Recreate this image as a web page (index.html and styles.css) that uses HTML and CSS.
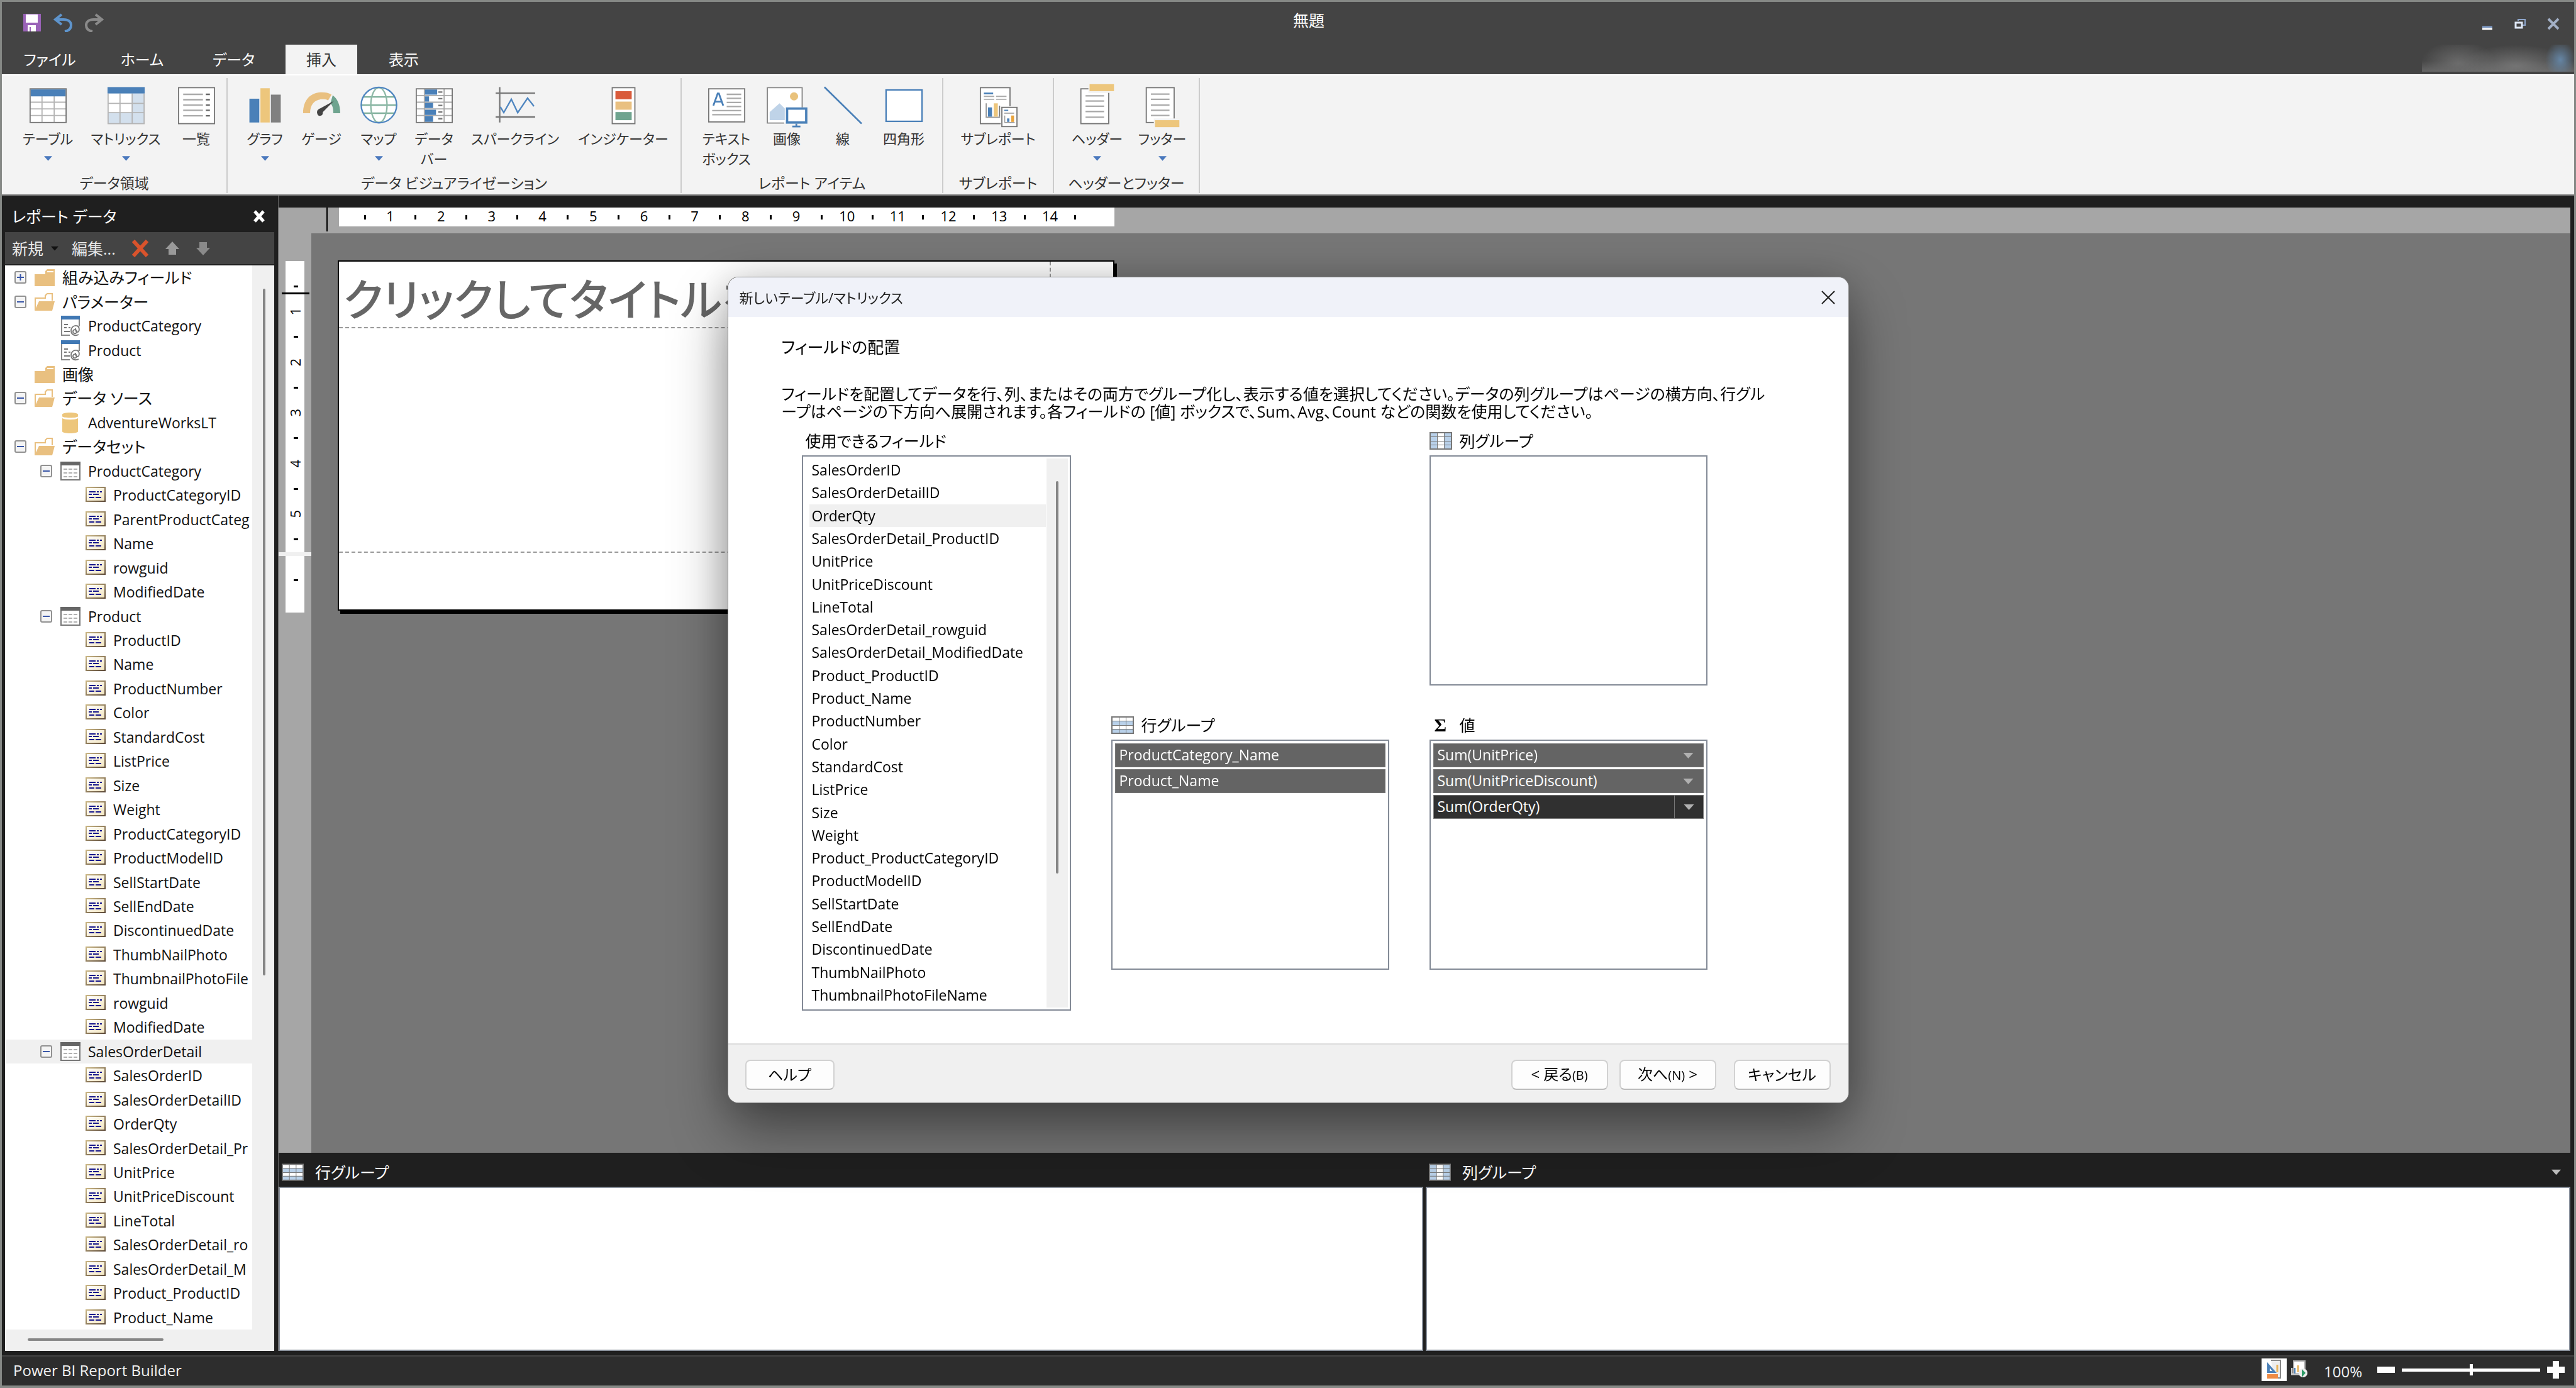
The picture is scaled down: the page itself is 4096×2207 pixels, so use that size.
FILE: index.html
```html
<!DOCTYPE html>
<html lang="ja">
<head>
<meta charset="utf-8">
<title>無題 - Power BI Report Builder</title>
<link rel="stylesheet" href="styles.css">
</head>
<body>
<svg class="sprite" aria-hidden="true">
  <defs>
    <linearGradient id="paper" x1="0" y1="0" x2="1" y2="1"><stop offset="0" stop-color="#fff"/><stop offset="1" stop-color="#f3e6c0"/></linearGradient>
    <linearGradient id="frame" x1="0" y1="0" x2="1" y2="1"><stop offset="0" stop-color="#c9b583"/><stop offset="1" stop-color="#5d4a38"/></linearGradient>
  </defs>
  <symbol id="i-table" viewBox="0 -4 72 78"><rect x="5" y="6" width="62" height="58" fill="#fff"/><path d="M25.5 18v46M46.500 18v46M5 29h62M5 40.500h62M5 52h62" stroke="#b5b5b5" stroke-width="2" fill="none"/><rect x="5" y="6" width="62" height="58" fill="none" stroke="#777" stroke-width="2"/><rect x="6" y="7" width="60" height="12" fill="#4a80b8"/></symbol>
  <symbol id="i-matrix" viewBox="0 -4 72 78"><rect x="5" y="14" width="62" height="52" fill="#fff"/><path d="M46 14h21v52H5V47h41z" fill="#d3e0ed"/><path d="M5 14v52h62V14M25.500 14v52M46.500 14v52M5 31h62M5 47h62" stroke="#b5b5b5" stroke-width="2" fill="none"/><rect x="4" y="3" width="64" height="11" fill="#4a80b8"/></symbol>
  <symbol id="i-list" viewBox="0 -4 72 78"><rect x="5" y="4" width="62" height="62" fill="#fff" stroke="#777" stroke-width="2"/><path d="M13 15.500h34M13 24.700h34M13 34h34M13 43h34M13 52.500h34" stroke="#aaa" stroke-width="2.500"/><path d="M52 15.500h7M52 24.700h7M52 34h7M52 43h7M52 52.500h7" stroke="#666" stroke-width="2.500"/></symbol>
  <symbol id="i-chart" viewBox="0 -4 72 78"><rect x="9" y="23" width="17" height="41" fill="#4a80b8"/><rect x="28" y="5" width="16" height="59" fill="#edc67c"/><rect x="46" y="16" width="17" height="48" fill="#808080"/></symbol>
  <symbol id="i-gauge" viewBox="0 -4 72 78"><path d="M4 48C4 24 18 12 36 12c7 0 12 1 17 4l-6 10c-3-2-6-2-10-2-12 0-21 8-21 24z" fill="#e9c080"/><path d="M55 17c8 6 13 16 13 31H56c0-8-1-13-5-17z" fill="#6fa48f"/><path d="M57 27 38 46a5 6 0 1 1-7-5z" fill="#444"/></symbol>
  <symbol id="i-map" viewBox="0 -4 72 78"><ellipse cx="36" cy="34" rx="30.500" ry="30.500" fill="#fff"/><path d="M9 20h54M6 34h60M9 48h54" stroke="#7fb09c" stroke-width="2.500"/><ellipse cx="36" cy="34" rx="14" ry="30" fill="none" stroke="#8db8a6" stroke-width="2.500"/><ellipse cx="36" cy="34" rx="30.500" ry="30.500" fill="none" stroke="#4f86c0" stroke-width="2.500"/></symbol>
  <symbol id="i-databar" viewBox="0 -4 72 78"><rect x="5" y="6" width="62" height="58" fill="#fff"/><path d="M19 6v58M53 6v58M5 17.500h62M5 29h62M5 40.500h62M5 52h62" stroke="#aaa" stroke-width="2"/><path d="M20 7h21v9H20zM20 19h7v9h-7zM20 30h14v9H20zM20 42h19v9H20zM20 53h14v10H20z" fill="#4a80b8"/><path d="M43 11.500h7M43 23h7M43 34.500h7M43 46h7M43 57.500h7" stroke="#777" stroke-width="2.500"/><rect x="5" y="6" width="62" height="58" fill="none" stroke="#777" stroke-width="2"/></symbol>
  <symbol id="i-spark" viewBox="0 -4 72 78"><path d="M9 3v61M2 13.500h68M2 54.500h68" stroke="#777" stroke-width="2.500"/><path d="m10 37 6 10 13-23 11 23 17-25 11 14" fill="none" stroke="#4f86c0" stroke-width="2.500"/></symbol>
  <symbol id="i-indicator" viewBox="0 -4 72 78"><rect x="16.500" y="4" width="39" height="62" fill="#fff" stroke="#777" stroke-width="2"/><rect x="22" y="10" width="28" height="14" fill="#d95b3b"/><rect x="22" y="28" width="28" height="14" fill="#e9c080"/><rect x="22" y="46" width="28" height="14" fill="#6fa48f"/></symbol>
  <symbol id="i-textbox" viewBox="0 -4 72 78"><rect x="5" y="6" width="62" height="57" fill="#fff" stroke="#777" stroke-width="2"/><path d="m13 35 7.500-21h2L30 35M16 28h11" fill="none" stroke="#4a80b8" stroke-width="3"/><path d="M36 15.500h25M36 22.500h25M36 29.500h25M36 36.500h25M11 43.500h50M11 50.500h50" stroke="#aaa" stroke-width="2.500"/></symbol>
  <symbol id="i-image" viewBox="0 -4 72 78"><path d="M31 65H2V4h60v34" fill="#fff" stroke="#888" stroke-width="2"/><circle cx="48" cy="19" r="7" fill="#e9c27c"/><path d="M6 60V46l17-15 9 9v20z" fill="#bfd3e8"/><rect x="36" y="40" width="33" height="24" fill="#fff" stroke="#4a80b8" stroke-width="4"/><path d="M52 66v5M45 71h14" stroke="#4a80b8" stroke-width="3"/></symbol>
  <symbol id="i-line" viewBox="0 -4 72 78"><path d="m4 3 64 63" stroke="#4a80b8" stroke-width="3"/></symbol>
  <symbol id="i-rect" viewBox="0 -4 72 78"><rect x="5" y="8" width="62" height="54" fill="#fff" stroke="#4a80b8" stroke-width="2.500"/></symbol>
  <symbol id="i-subreport" viewBox="0 -4 72 78"><rect x="5" y="4" width="51" height="62" fill="#fff" stroke="#777" stroke-width="2"/><path d="M11 14h16" stroke="#4a80b8" stroke-width="3"/><path d="M11 19h18M32 19h18M11 24h18M32 24h18" stroke="#aaa" stroke-width="2"/><path d="M15 31v24h24" fill="none" stroke="#999" stroke-width="2"/><path d="M18 38h7v16h-7z" fill="#4a80b8"/><path d="M28 31h7v23h-7z" fill="#edc67c"/><path d="M38 35v19" stroke="#777" stroke-width="2"/><rect x="40" y="36" width="30" height="36" fill="#f3f3f3"/><rect x="42" y="38" width="26" height="33" fill="#fff" stroke="#777" stroke-width="2"/><path d="M46 43h7" stroke="#4a80b8" stroke-width="2"/><path d="M46 48h17" stroke="#aaa" stroke-width="2"/><path d="M47 52v12h17" fill="none" stroke="#999" stroke-width="1.500"/><path d="M51 57h4v6h-4z" fill="#4a80b8"/><path d="M58 52h5v11h-5z" fill="#e8a33c"/></symbol>
  <symbol id="i-header" viewBox="0 -4 72 78"><rect x="8" y="6" width="48" height="60" fill="#fff" stroke="#777" stroke-width="2"/><path d="M16 18h32M16 27h32M16 36h32M16 45h32M16 55h32" stroke="#aaa" stroke-width="2.500"/><rect x="21" y="-4" width="45" height="17" fill="#f3f3f3"/><rect x="23" y="-2" width="42" height="12" fill="#edc67c"/></symbol>
  <symbol id="i-footer" viewBox="0 -4 72 78"><rect x="8" y="4" width="48" height="60" fill="#fff" stroke="#777" stroke-width="2"/><path d="M16 15h32M16 24h32M16 34h32M16 43h32M16 52h32" stroke="#aaa" stroke-width="2.500"/><rect x="21" y="57" width="45" height="17" fill="#f3f3f3"/><rect x="23" y="60" width="42" height="12" fill="#edc67c"/></symbol>
  <symbol id="i-folder" viewBox="0 0 32 34"><path d="M0 12h17V7l3-3h12v27H0z" fill="#e9c080"/><path d="M20 8h10" stroke="#fff" stroke-width="2"/></symbol>
  <symbol id="i-open" viewBox="0 0 32 34"><path d="M1 30V11h16V7l3-3h8v11" fill="#fff" stroke="#e9c080" stroke-width="2"/><path d="M0 31 7 16h25l-4 15z" fill="#e9c080"/></symbol>
  <symbol id="i-param" viewBox="0 0 32 34"><path d="M2 2v30h13M30 6v12" fill="none" stroke="#888" stroke-width="2"/><rect x="1" y="1" width="30" height="6" fill="#4078b4"/><path d="M6 15h6M6 20h4M13 20h3M6 26h9" stroke="#777" stroke-width="2"/><path d="M29 31c-6 3-12 0-12-6s5-9 9-8c5 1 5 10 1 10-3 0-3-6-3-6m1 3a3 3 0 1 1-4 0 3 3 0 0 1 4 0" fill="none" stroke="#777" stroke-width="1.800"/></symbol>
  <symbol id="i-db" viewBox="0 0 32 34"><path d="M3 4c0-4 25-4 25 0v3c0 3-25 3-25 0zM3 10c5 3 20 3 25 0v21c0 4-25 4-25 0z" fill="#edc67c"/></symbol>
  <symbol id="i-dataset" viewBox="0 0 32 34"><rect x="1" y="3" width="30" height="28" fill="#fff" stroke="#777" stroke-width="2"/><rect x="0" y="2" width="32" height="6" fill="#666"/><path d="M5 14h22M5 20h22M5 26h22" stroke="#b0b0b0" stroke-width="2" stroke-dasharray="6 2"/></symbol>
  <symbol id="i-field" viewBox="0 0 32 34"><rect x="1" y="5" width="30" height="22" fill="url(#paper)" stroke="url(#frame)" stroke-width="2"/><path d="M6 12h10M18 12h3M23 12h3M5 16h5M12 16h9M6 21h8M16 21h9" stroke="#17178c" stroke-width="2"/></symbol>
  <symbol id="i-rows" viewBox="0 0 36 28"><rect width="36" height="28" fill="#777"/><path d="M2 2h10v5H2zM13 2h10v5H13zM24 2h10v5H24zM2 15h10v5H2zM13 15h10v5H13zM24 15h10v5H24z" fill="#fff"/><path d="M2 8h10v6H2zM13 8h10v6H13zM24 8h10v6H24zM2 21h10v5H2zM13 21h10v5H13zM24 21h10v5H24z" fill="#b9d1ea"/></symbol>
  <symbol id="i-cols" viewBox="0 0 36 28"><rect width="36" height="28" fill="#777"/><path d="M13 2h10v5H13zM13 8h10v6H13zM13 15h10v5H13zM13 21h10v5H13z" fill="#fff"/><path d="M2 2h10v5H2zM24 2h10v5H24zM2 8h10v6H2zM24 8h10v6H24zM2 15h10v5H2zM24 15h10v5H24zM2 21h10v5H2zM24 21h10v5H24z" fill="#b9d1ea"/></symbol>
  <symbol id="i-down" viewBox="0 0 16 9"><path d="M0 0h16L8 9z" fill="currentColor"/></symbol>
  <symbol id="i-plus" viewBox="0 0 19 20"><rect x="1" y="1" width="17" height="18" rx="2" fill="#f4f4f4" stroke="#919191" stroke-width="2"/><path d="M4 10h11M9.500 5v10" stroke="#3a57a8" stroke-width="2"/></symbol>
  <symbol id="i-minus" viewBox="0 0 19 20"><rect x="1" y="1" width="17" height="18" rx="2" fill="#f4f4f4" stroke="#919191" stroke-width="2"/><path d="M4 10h11" stroke="#3a57a8" stroke-width="2"/></symbol>
</svg>

<div class="window">
  <header class="titlebar">
    <div class="title-row">
      <div class="quick">
        <button aria-label="保存"><svg width="28" height="28" viewBox="0 0 28 28"><path d="M0 0h28v28H0z" fill="#9a63b8"/><path d="M4 1h19v13H4zM7 18h13v10H7z" fill="#fff"/><path d="M11 21v7" stroke="#9a63b8" stroke-width="2"/></svg></button>
        <button aria-label="元に戻す"><svg width="30" height="30" viewBox="0 0 30 30"><path d="M13 2 3 10l10 8M4 10h12c8 0 12 4 12 9 0 6-4 9-10 10" fill="none" stroke="#5e94cc" stroke-width="4"/></svg></button>
        <button aria-label="やり直し"><svg width="30" height="30" viewBox="0 0 30 30"><path d="m17 2 10 8-10 8m9-8H14C6 10 2 14 2 19c0 6 4 9 10 10" fill="none" stroke="#8a8a8a" stroke-width="4"/></svg></button>
      </div>
      <h1 class="doc-title">無題</h1>
      <div class="win-controls">
        <button aria-label="最小化"><svg width="20" height="20" viewBox="0 0 20 20"><path d="M2 15h16" stroke="#7f9cc8" stroke-width="3"/><path d="M2 18h16" stroke="#fff" stroke-width="3"/></svg></button>
        <button aria-label="元のサイズに戻す"><svg width="20" height="20" viewBox="0 0 20 20"><path d="M7 5V3h11v9h-4" fill="none" stroke="#8ea6cc" stroke-width="2"/><rect x="3" y="8" width="10" height="8" fill="#444" stroke="#dfe8f6" stroke-width="3"/></svg></button>
        <button aria-label="閉じる"><svg width="22" height="20" viewBox="0 0 22 20"><path d="m3 2 16 16M19 2 3 18" stroke="#a3b0c6" stroke-width="4"/></svg></button>
      </div>
    </div>
    <nav class="tabs">
      <button class="tab">ファイル</button>
      <button class="tab">ホーム</button>
      <button class="tab">データ</button>
      <button class="tab active">挿入</button>
      <button class="tab">表示</button>
      <div class="account"></div>
    </nav>
  </header>

  <div class="ribbon">
    <section class="group g-data">
      <div class="tools">
        <button><svg><use href="#i-table"/></svg>テーブル<svg class="drop"><use href="#i-down"/></svg></button>
        <button><svg><use href="#i-matrix"/></svg>マトリックス<svg class="drop"><use href="#i-down"/></svg></button>
        <button><svg><use href="#i-list"/></svg>一覧</button>
      </div>
      <h2>データ領域</h2>
    </section>
    <section class="group g-visual">
      <div class="tools">
        <button><svg><use href="#i-chart"/></svg>グラフ<svg class="drop"><use href="#i-down"/></svg></button>
        <button><svg><use href="#i-gauge"/></svg>ゲージ</button>
        <button><svg><use href="#i-map"/></svg>マップ<svg class="drop"><use href="#i-down"/></svg></button>
        <button><svg><use href="#i-databar"/></svg>データ<br>バー</button>
        <button><svg><use href="#i-spark"/></svg>スパークライン</button>
        <button><svg><use href="#i-indicator"/></svg>インジケーター</button>
      </div>
      <h2>データ ビジュアライゼーション</h2>
    </section>
    <section class="group g-items">
      <div class="tools">
        <button><svg><use href="#i-textbox"/></svg>テキスト<br>ボックス</button>
        <button><svg><use href="#i-image"/></svg>画像</button>
        <button><svg><use href="#i-line"/></svg>線</button>
        <button><svg><use href="#i-rect"/></svg>四角形</button>
      </div>
      <h2>レポート アイテム</h2>
    </section>
    <section class="group g-sub">
      <div class="tools">
        <button><svg><use href="#i-subreport"/></svg>サブレポート</button>
      </div>
      <h2>サブレポート</h2>
    </section>
    <section class="group g-hf">
      <div class="tools">
        <button><svg><use href="#i-header"/></svg>ヘッダー<svg class="drop"><use href="#i-down"/></svg></button>
        <button><svg><use href="#i-footer"/></svg>フッター<svg class="drop"><use href="#i-down"/></svg></button>
      </div>
      <h2>ヘッダーとフッター</h2>
    </section>
  </div>

  <main class="main">
    <aside class="data-panel">
      <div class="panel-head"><h2>レポート データ</h2><button aria-label="閉じる"><svg width="20" height="20" viewBox="0 0 20 20"><path d="m3 2 14 16M17 2 3 18" stroke="#fff" stroke-width="5"/></svg></button></div>
      <div class="panel-tools">
        <button class="new">新規<svg width="12" height="8"><use href="#i-down"/></svg></button>
        <button>編集...</button>
        <button aria-label="削除"><svg width="28" height="28" viewBox="0 0 28 28"><path d="m3 2 22 24M25 2 3 26" stroke="#d9532c" stroke-width="6"/></svg></button>
        <button aria-label="上へ"><svg width="24" height="24" viewBox="0 0 24 24"><path d="M12 1 1 13h5v9h12v-9h5z" fill="#999"/></svg></button>
        <button aria-label="下へ"><svg width="24" height="24" viewBox="0 0 24 24"><path d="M12 23 1 11h5V2h12v9h5z" fill="#8a8a8a"/></svg></button>
      </div>
      <div class="tree-box">
        <ul class="tree">
          <li class="jp"><svg class="exp"><use href="#i-plus"/></svg><svg><use href="#i-folder"/></svg>組み込みフィールド</li>
          <li class="jp"><svg class="exp"><use href="#i-minus"/></svg><svg><use href="#i-open"/></svg>パラメーター</li>
          <li class="l1"><svg><use href="#i-param"/></svg>ProductCategory</li>
          <li class="l1"><svg><use href="#i-param"/></svg>Product</li>
          <li class="jp l0"><svg><use href="#i-folder"/></svg>画像</li>
          <li class="jp"><svg class="exp"><use href="#i-minus"/></svg><svg><use href="#i-open"/></svg>データ ソース</li>
          <li class="l1"><svg><use href="#i-db"/></svg>AdventureWorksLT</li>
          <li class="jp"><svg class="exp"><use href="#i-minus"/></svg><svg><use href="#i-open"/></svg>データセット</li>
          <li class="l1x"><svg class="exp"><use href="#i-minus"/></svg><svg><use href="#i-dataset"/></svg>ProductCategory</li>
          <li class="l2"><svg><use href="#i-field"/></svg>ProductCategoryID</li>
          <li class="l2"><svg><use href="#i-field"/></svg>ParentProductCateg</li>
          <li class="l2"><svg><use href="#i-field"/></svg>Name</li>
          <li class="l2"><svg><use href="#i-field"/></svg>rowguid</li>
          <li class="l2"><svg><use href="#i-field"/></svg>ModifiedDate</li>
          <li class="l1x"><svg class="exp"><use href="#i-minus"/></svg><svg><use href="#i-dataset"/></svg>Product</li>
          <li class="l2"><svg><use href="#i-field"/></svg>ProductID</li>
          <li class="l2"><svg><use href="#i-field"/></svg>Name</li>
          <li class="l2"><svg><use href="#i-field"/></svg>ProductNumber</li>
          <li class="l2"><svg><use href="#i-field"/></svg>Color</li>
          <li class="l2"><svg><use href="#i-field"/></svg>StandardCost</li>
          <li class="l2"><svg><use href="#i-field"/></svg>ListPrice</li>
          <li class="l2"><svg><use href="#i-field"/></svg>Size</li>
          <li class="l2"><svg><use href="#i-field"/></svg>Weight</li>
          <li class="l2"><svg><use href="#i-field"/></svg>ProductCategoryID</li>
          <li class="l2"><svg><use href="#i-field"/></svg>ProductModelID</li>
          <li class="l2"><svg><use href="#i-field"/></svg>SellStartDate</li>
          <li class="l2"><svg><use href="#i-field"/></svg>SellEndDate</li>
          <li class="l2"><svg><use href="#i-field"/></svg>DiscontinuedDate</li>
          <li class="l2"><svg><use href="#i-field"/></svg>ThumbNailPhoto</li>
          <li class="l2"><svg><use href="#i-field"/></svg>ThumbnailPhotoFile</li>
          <li class="l2"><svg><use href="#i-field"/></svg>rowguid</li>
          <li class="l2"><svg><use href="#i-field"/></svg>ModifiedDate</li>
          <li class="l1x selected"><svg class="exp"><use href="#i-minus"/></svg><svg><use href="#i-dataset"/></svg>SalesOrderDetail</li>
          <li class="l2"><svg><use href="#i-field"/></svg>SalesOrderID</li>
          <li class="l2"><svg><use href="#i-field"/></svg>SalesOrderDetailID</li>
          <li class="l2"><svg><use href="#i-field"/></svg>OrderQty</li>
          <li class="l2"><svg><use href="#i-field"/></svg>SalesOrderDetail_Pr</li>
          <li class="l2"><svg><use href="#i-field"/></svg>UnitPrice</li>
          <li class="l2"><svg><use href="#i-field"/></svg>UnitPriceDiscount</li>
          <li class="l2"><svg><use href="#i-field"/></svg>LineTotal</li>
          <li class="l2"><svg><use href="#i-field"/></svg>SalesOrderDetail_ro</li>
          <li class="l2"><svg><use href="#i-field"/></svg>SalesOrderDetail_M</li>
          <li class="l2"><svg><use href="#i-field"/></svg>Product_ProductID</li>
          <li class="l2"><svg><use href="#i-field"/></svg>Product_Name</li>
        </ul>
        <div class="scroll-v"><i></i></div>
        <div class="scroll-h"><i></i></div>
      </div>
    </aside>

    <div class="workspace">
      <div class="design">
        <div class="ruler-corner"></div>
        <div class="ruler-h">
          <i class="cursor-x"></i>
          <div class="scale-h"><i></i><b>1</b><i></i><b>2</b><i></i><b>3</b><i></i><b>4</b><i></i><b>5</b><i></i><b>6</b><i></i><b>7</b><i></i><b>8</b><i></i><b>9</b><i></i><b>10</b><i></i><b>11</b><i></i><b>12</b><i></i><b>13</b><i></i><b>14</b><i></i></div>
        </div>
        <div class="ruler-v">
          <div class="scale-v"><i></i><b>1</b><i></i><b>2</b><i></i><b>3</b><i></i><b>4</b><i></i><b>5</b><i></i></div>
          <div class="band"></div>
          <div class="scale-v foot"><i></i></div>
          <i class="cursor-y"></i>
        </div>
        <div class="canvas">
          <article class="page">
            <div class="page-title">クリックしてタイトルを追加</div>
            <div class="page-body"></div>
            <div class="page-foot"></div>
          </article>
        </div>
      </div>
      <div class="groups">
        <section><h2><svg><use href="#i-rows"/></svg>行グループ</h2><div class="pane"></div></section>
        <section><h2><svg><use href="#i-cols"/></svg>列グループ<button aria-label="メニュー"><svg><use href="#i-down"/></svg></button></h2><div class="pane"></div></section>
      </div>
    </div>
  </main>

  <footer class="status">
    <span class="app">Power BI Report Builder</span>
    <button class="view on" aria-label="デザイン"><svg width="24" height="32" viewBox="0 0 24 32"><path d="M7 1h15v28H12" fill="#eee" stroke="#888" stroke-width="2"/><path d="M1 4v17h15z" fill="#4a80b8"/><path d="M5 13v5h4z" fill="#fff"/><path d="M17 8v12" stroke="#e8b45c" stroke-width="3"/><path d="M1 23h17v7H1z" fill="#ee8b45"/></svg></button>
    <button class="view" aria-label="実行"><svg width="26" height="30" viewBox="0 0 26 30"><path d="M4 1h18v20H4z" fill="#fff" stroke="#aaa" stroke-width="2"/><path d="M1 12v10h12" fill="none" stroke="#ccc" stroke-width="3"/><path d="M11 8v11" stroke="#e8b45c" stroke-width="3"/><path d="M6 12v9" stroke="#4a80b8" stroke-width="2"/><circle cx="19" cy="20" r="7" fill="#eee"/><path d="m17 14 6 6-6 7z" fill="#2e9a66"/></svg></button>
    <span class="percent">100%</span>
    <button aria-label="縮小"><svg width="28" height="28" viewBox="0 0 28 28"><path d="M0 14h28" stroke="#fff" stroke-width="10"/></svg></button>
    <input type="range" class="zoom" aria-label="ズーム" min="0" max="100" value="50">
    <button aria-label="拡大"><svg width="28" height="28" viewBox="0 0 28 28"><path d="M0 14h28M14 0v28" stroke="#fff" stroke-width="10"/></svg></button>
  </footer>
</div>

<div class="overlay">
  <section class="dialog" role="dialog" aria-labelledby="dlg-title">
    <header><h2 id="dlg-title">新しいテーブル/マトリックス</h2><button aria-label="閉じる"><svg width="24" height="24" viewBox="0 0 24 24"><path d="m2 2 20 20M22 2 2 22" stroke="#222" stroke-width="2"/></svg></button></header>
    <div class="dlg-body">
      <h3>フィールドの配置</h3>
      <p>フィールドを配置してデータを行、列、またはその両方でグループ化し、表示する値を選択してください。データの列グループはページの横方向、行グル<br>ープはページの下方向へ展開されます。各フィールドの [値] ボックスで、Sum、Avg、Count などの関数を使用してください。</p>
      <div class="fields">
        <div class="available">
          <h4>使用できるフィールド</h4>
          <div class="listbox">
            <ul>
              <li>SalesOrderID</li><li>SalesOrderDetailID</li><li class="selected">OrderQty</li><li>SalesOrderDetail_ProductID</li><li>UnitPrice</li><li>UnitPriceDiscount</li><li>LineTotal</li><li>SalesOrderDetail_rowguid</li><li>SalesOrderDetail_ModifiedDate</li><li>Product_ProductID</li><li>Product_Name</li><li>ProductNumber</li><li>Color</li><li>StandardCost</li><li>ListPrice</li><li>Size</li><li>Weight</li><li>Product_ProductCategoryID</li><li>ProductModelID</li><li>SellStartDate</li><li>SellEndDate</li><li>DiscontinuedDate</li><li>ThumbNailPhoto</li><li>ThumbnailPhotoFileName</li>
            </ul>
            <div class="scroll-v"><i></i></div>
          </div>
        </div>
        <div class="well cols"><h4><svg><use href="#i-cols"/></svg>列グループ</h4><div class="box"></div></div>
        <div class="well rows"><h4><svg><use href="#i-rows"/></svg>行グループ</h4><div class="box"><div class="chip">ProductCategory_Name</div><div class="chip">Product_Name</div></div></div>
        <div class="well"><h4><span class="sigma">Σ</span>値</h4><div class="box">
          <div class="chip">Sum(UnitPrice)<button aria-label="集計"><svg><use href="#i-down"/></svg></button></div>
          <div class="chip">Sum(UnitPriceDiscount)<button aria-label="集計"><svg><use href="#i-down"/></svg></button></div>
          <div class="chip on">Sum(OrderQty)<button aria-label="集計"><svg><use href="#i-down"/></svg></button></div>
        </div></div>
      </div>
    </div>
    <footer><button class="help">ヘルプ</button><button>&lt; 戻る<small>(B)</small></button><button>次へ<small>(N)</small> &gt;</button><button class="cancel">キャンセル</button></footer>
  </section>
</div>
</body>
</html>
```
FILE: styles.css
```css
* { box-sizing: border-box; }
body, h1, h2, h3, h4, p, ul { margin: 0; padding: 0; }
h1, h2, h3, h4, b { font-weight: 400; }
ul { list-style: none; }
body {
  font-family: "Open Sans", "Noto Sans CJK JP", sans-serif;
  font-size: 23px;
  line-height: 32px;
  font-feature-settings: "palt";
  color: #111;
  overflow: hidden;
}
button {
  font: inherit;
  font-feature-settings: inherit;
  color: inherit;
  background: none;
  border: 0;
  padding: 0;
}
svg { display: block; flex: none; }
.sprite { position: absolute; width: 0; height: 0; }

.window {
  display: flex;
  flex-direction: column;
  height: 100vh;
  border: 3px solid #868986;
  border-bottom-width: 4px;
  background: #1f1f1f;
}

/* title bar and tabs */
.titlebar { flex: none; background: #444; color: #fff; }
.title-row {
  display: grid;
  grid-template-columns: 1fr auto 1fr;
  align-items: center;
  height: 65px;
}
.quick { display: flex; align-items: center; gap: 20px; padding-left: 34px; }
.doc-title { font-size: 25px; padding-left: 66px; padding-bottom: 8px; }
.win-controls { display: flex; justify-content: flex-end; gap: 32px; padding: 4px 22px 0 0; }
.tabs { display: flex; align-items: stretch; height: 50px; padding-top: 3px; }
.tab { min-width: 114px; padding: 0 4px; font-size: 24px; color: #fff; }
.tab:first-child { min-width: 152px; }
.tab:nth-child(2) { min-width: 142px; }
.tab:nth-child(3) { min-width: 157px; padding: 0 8px 0 0; }
.tab:nth-child(5) { min-width: 148px; }
.tab.active { background: #f3f3f3; color: #333; }
.account {
  width: 242px;
  height: 43px;
  margin-left: auto;
  background:
    radial-gradient(ellipse 24px 30px at 91% 56%, #6585a4, transparent),
    radial-gradient(ellipse 90px 34px at 62% 80%, #747474, transparent),
    radial-gradient(ellipse 60px 36px at 24% 70%, #6c6c6c, transparent),
    linear-gradient(#444 60%, #666);
}

/* ribbon */
.ribbon {
  flex: none;
  display: flex;
  height: 193px;
  padding: 4px 0 2px;
  background: #f3f3f3;
  border-top: 2px solid #fff;
  border-bottom: 2px solid #888;
  color: #333;
}
.group { display: flex; flex-direction: column; border-right: 2px solid #ccc; }
.tools { flex: 1; display: grid; padding-top: 8px; align-items: start; }
.tools button { font-size: 22px; line-height: 32px; text-align: center; white-space: nowrap; }
.tools svg { width: 67px; height: 72px; margin: 0 auto; }
.tools .drop { width: 13px; height: 8px; margin-top: 12px; color: #4a78bd; }
.group h2 { font-size: 23px; line-height: 32px; text-align: center; white-space: nowrap; }
.g-data .tools { grid-template-columns: 120px 128px 96px; padding-left: 13px; }
.g-visual .tools { grid-template-columns: 90px 90px 92px 84px 174px 170px; padding: 8px 6px 0 14px; }
.g-items .tools { grid-template-columns: 98px 94px 84px 110px; padding: 8px 6px 0 22px; }
.g-sub .tools { grid-template-columns: 174px; }
.g-hf .tools { grid-template-columns: 103px 104px; padding: 8px 6px 0 17px; }

/* report data panel */
.main { flex: 1; min-height: 0; display: grid; grid-template-columns: 440px minmax(0, 1fr); padding: 0 6px 7px 0; background: #1f1f1f; }
.data-panel { display: flex; flex-direction: column; min-height: 0; padding: 0 6px 0 5px; border-right: 1px solid #666; }
.panel-head { display: flex; align-items: center; justify-content: space-between; height: 58px; padding: 8px 14px 0 11px; color: #fff; }
.panel-head h2 { font-size: 25px; }
.panel-tools { display: flex; align-items: center; gap: 25px; height: 51px; margin-bottom: 2px; padding-left: 11px; background: #444; color: #e8e8e8; font-size: 25px; }
.panel-tools .new { display: flex; align-items: center; gap: 12px; margin-right: -4px; }
.panel-tools .new svg { color: #111; }
.tree-box { flex: 1; min-height: 0; display: grid; grid-template-columns: minmax(0, 1fr) 35px; grid-template-rows: minmax(0, 1fr) 34px; background: #f0f0f0; }
.tree { display: grid; grid-auto-rows: 1fr; background: #fff; overflow: hidden; }
.tree li { display: flex; align-items: center; min-height: 0; padding-left: 15px; white-space: nowrap; font-size: 23px; line-height: 32px; }
.tree .jp { font-size: 25px; }
.tree svg { width: 32px; height: 34px; margin-right: 12px; }
.tree .exp { width: 19px; height: 20px; margin-right: 13px; }
.tree .l0 { padding-left: 47px; }
.tree .l1 { padding-left: 88px; }
.tree .l1x { padding-left: 56px; }
.tree .l2 { padding-left: 128px; }
.selected { background: #f0f0f0; }
.tree-box .scroll-v { padding: 37px 0 0 17px; }
.tree-box .scroll-v i { display: block; width: 4px; height: 66%; background: #868686; border-radius: 2px; }
.scroll-h { padding: 14px 0 0 36px; }
.scroll-h i { display: block; width: 216px; height: 4px; background: #868686; border-radius: 2px; }

/* design surface */
.workspace { display: flex; flex-direction: column; min-width: 0; padding-top: 19px; }
.design { flex: 1; min-height: 0; display: grid; grid-template-columns: 52px minmax(0, 1fr); grid-template-rows: 41px minmax(0, 1fr); background: #767676; }
.ruler-corner, .ruler-h, .ruler-v { background: #a6a6a6; }
.ruler-h { display: flex; }
.cursor-x { width: 2px; height: 38px; margin: 0 18px 0 24px; background: #000; }
.scale-h, .scale-v { display: grid; background: #fff; font-family: "Open Sans", sans-serif; font-size: 22px; line-height: 24px; color: #000; }
.scale-h { grid-template-columns: repeat(29, minmax(0, 1fr)); width: 1233px; height: 30px; padding: 0 42px 0 21px; justify-items: center; align-items: center; }
.scale-h b { margin-top: -4px; }
.scale-h i { width: 3px; height: 7px; background: #000; }
.ruler-v { position: relative; padding-top: 44px; }
.scale-v { width: 30px; height: 463px; margin-left: 11px; padding: 20px 0 0; grid-template-rows: repeat(11, minmax(0, 1fr)); justify-items: center; align-items: center; }
.scale-v.foot { height: 90px; padding: 0; grid-template-rows: 76px; }
.scale-v b { writing-mode: vertical-rl; transform: rotate(180deg); }
.scale-v i { width: 7px; height: 3px; margin-left: 3px; background: #000; }
.band { height: 6px; background: #f0f0f0; }
.cursor-y { position: absolute; left: 5px; right: 3px; top: 94px; height: 3px; background: #000; }
.canvas { padding: 43px 0 0 42px; }
.page { width: 1235px; border: 2px solid #000; background: #fff; box-shadow: 4px 5px 0 #000; }
.page-title { width: 1132px; height: 104px; padding: 0 7px; border-right: 2px dashed #999; font-size: 70px; font-weight: 500; line-height: 120px; color: #666; white-space: nowrap; }
.page-body { height: 359px; border: 2px dashed #999; border-width: 2px 0; }
.page-foot { height: 90px; }

/* grouping panes */
.groups { flex: none; display: grid; grid-template-columns: 1fr 1fr; gap: 4px; }
.groups h2 { display: flex; align-items: center; gap: 18px; height: 54px; padding: 8px 15px 0 5px; font-size: 25px; color: #fff; }
.groups h2 svg { width: 35px; height: 28px; }
.groups button { margin-left: auto; color: #bbb; }
.groups h2 button svg { width: 15px; height: 10px; }
.pane { height: 261px; background: #fff; border: 2px solid #8a919c; }

/* status bar */
.status { flex: none; display: flex; align-items: center; height: 48px; padding: 0 15px 4px 18px; border-top: 2px solid #444; background: #2d2d2d; color: #f0f0f0; }
.app { flex: 1; padding-top: 2px; font-size: 24px; }
.view { display: grid; place-items: center; width: 40px; height: 36px; }
.view.on { background: #fff; }
.percent { margin: 6px 24px 0 19px; font-size: 24px; }
.zoom { appearance: none; width: 220px; height: 18px; margin: 0 11px; background: linear-gradient(#fff, #fff) center / 100% 5px no-repeat; }
.zoom::-webkit-slider-thumb { appearance: none; width: 5px; height: 18px; background: #fff; }

/* dialog */
.overlay { position: fixed; inset: 0; display: grid; place-items: center; padding-bottom: 13px; }
.dialog { width: 1781px; border-radius: 16px; background: #fff; overflow: hidden; box-shadow: 0 0 0 1px #8a8a8a, 0 44px 90px rgba(0, 0, 0, .42), 0 0 60px rgba(0, 0, 0, .16); color: #000; }
.dialog header { display: flex; justify-content: space-between; align-items: center; height: 63px; padding: 0 20px 0 18px; background: #f0f2f9; }
.dialog header h2 { font-size: 22px; color: #222; }
.dlg-body { padding: 30px 0 52px 85px; }
.dlg-body h3 { font-size: 26px; line-height: 36px; }
.dlg-body p { margin-top: 42px; font-size: 25px; line-height: 28px; white-space: nowrap; }
.fields { display: grid; grid-template-columns: 428px 442px 442px; grid-template-rows: auto 1fr; column-gap: 64px; row-gap: 46px; margin: 16px 0 0 32px; }
.fields h4 { display: flex; align-items: center; height: 34px; margin-bottom: 6px; font-size: 25px; line-height: 34px; }
.available { grid-row: 1 / 3; }
.available h4 { padding-left: 6px; }
.well.cols { grid-column: 3; }
.well.rows { grid-column: 2; }
.well h4 svg { width: 36px; height: 28px; margin-right: 12px; }
.sigma { width: 48px; padding-left: 8px; font-family: "Liberation Serif", serif; font-size: 30px; font-weight: 700; }
.listbox { display: grid; grid-template-columns: minmax(0, 1fr) 34px; column-gap: 1px; height: 883px; padding: 3px 3px 3px 10px; border: 2px solid #838a96; }
.listbox ul { display: grid; grid-template-columns: 1fr; grid-auto-rows: 1fr; padding-bottom: 2px; }
.listbox li { display: flex; align-items: center; min-height: 0; padding-left: 4px; font-size: 23px; }
.listbox .scroll-v { padding: 36px 0 0 15px; background: #f0f0f0; }
.listbox .scroll-v i { display: block; width: 4px; height: 624px; background: #868686; border-radius: 2px; }
.box { display: flex; flex-direction: column; gap: 3px; height: 366px; padding: 4px; border: 2px solid #838a96; }
.chip { display: flex; align-items: center; justify-content: space-between; height: 38px; padding: 0 0 2px 6px; background: #646464; border: 1px solid #777; color: #fff; }
.chip button { display: grid; place-items: center; width: 46px; height: 36px; margin-bottom: -2px; color: #b0b0b0; }
.chip svg { width: 17px; height: 9px; }
.chip.on { background: #303030; }
.chip.on button { border-left: 1px solid #777; }
.dialog footer { display: flex; gap: 18px; height: 94px; padding: 24px 28px 0 27px; border-top: 2px solid #dcdcdc; background: #f0f0f0; }
.dialog footer button { width: 154px; height: 48px; border: 2px solid #d2d2d2; border-bottom-color: #bbb; border-radius: 8px; background: #fdfdfd; font-size: 24px; }
.dialog footer .help { width: 142px; margin-right: auto; }
.dialog footer .cancel { margin-left: 10px; }
.dialog footer small { font-size: 20px; }
```
